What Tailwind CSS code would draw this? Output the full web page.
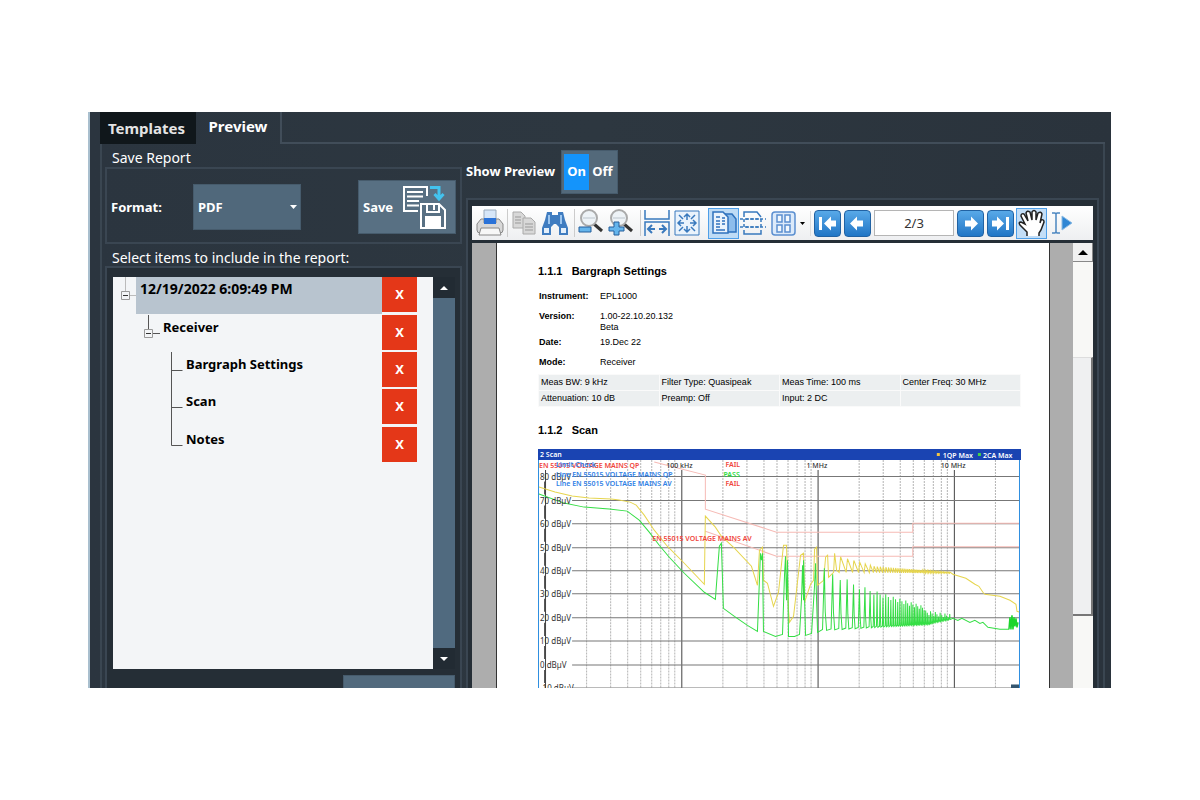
<!DOCTYPE html>
<html lang="en">
<head>
<meta charset="utf-8">
<title>Report Preview</title>
<script src="https://cdn.jsdelivr.net/npm/@tailwindcss/browser@4"></script>
</head>
<body class="bg-white">
<div class="min-h-screen flex pl-[88px] pr-[89px] py-28 font-['Noto_Sans',sans-serif] text-white">
<main class="flex-1 h-[576px] overflow-hidden flex flex-col border-l-2 border-[#a9bfce] bg-gradient-to-r from-[#2b353f] via-[#2d3740] to-[#2a333c] pl-[10px] pr-[6px]">
  <nav class="flex shrink-0 text-[15px] font-bold">
    <button class="h-8 w-24 bg-[#10171b] text-[#e4e4e4] pr-[3px] leading-8">Templates</button>
    <button class="h-8 w-[86px] border-r-2 border-[#414d59] pb-1 leading-7">Preview</button>
    <div class="flex-1 border-b-2 border-[#414d59]"></div>
  </nav>
  <div class="flex flex-1 min-h-0 border-x-2 border-[#3a4651] pl-[3px] pr-1">
    <section class="w-[357px] shrink-0 flex flex-col text-sm">
      <h2 class="pl-[7px] h-[23px] leading-7">Save Report</h2>
      <div class="h-[77px] shrink-0 border-2 border-[#3a4652] flex items-center px-1 pt-[3px]">
        <label for="fmt" class="w-[82px] font-bold text-[13px]">Format:</label>
        <div class="relative w-[108px] h-[46px]">
          <select id="fmt" class="appearance-none w-full h-full bg-[#50687b] border border-[#465b6c] pl-1 text-[13px] font-bold text-white"><option>PDF</option></select>
          <svg class="absolute right-1 top-[21px] pointer-events-none" width="7" height="4"><path d="M0 0h7L3.500 4z" fill="#fff"/></svg>
        </div>
        <button class="ml-auto w-[98px] h-[54px] bg-[#587083] border border-[#465b6c] flex items-center pl-1 text-[13px] font-bold">Save
          <svg class="ml-2" width="46" height="46" viewBox="0 0 46 46" fill="none">
            <path d="M17 27H3V3h23v9" stroke="#fff" stroke-width="2"/>
            <path d="M6 8h16M6 12.500h16M6 17h12M6 21.500h12" stroke="#fff" stroke-width="2"/>
            <path d="M29 3.500h9V13M33.500 10l4.500 5 4.500-5" stroke="#43c3ee" stroke-width="3"/>
            <path d="M20 20h18l6 6v18H20z" stroke="#fff" stroke-width="2"/>
            <path d="M26 20v8h12v-8M33 21v5" stroke="#fff" stroke-width="2"/>
            <path d="M24 32h16v12H24z" fill="#fff"/>
          </svg>
        </button>
      </div>
      <h2 class="pl-[7px] h-[22px] shrink-0 leading-[27px]">Select items to include in the report:</h2>
      <div class="flex-1 border-2 border-b-0 border-[#3a4652] bg-[#252e36] pt-[9px] pl-[6px] pr-[5px] flex flex-col">
        <div class="flex h-[392px] shrink-0">
          <div class="flex-1 bg-[#f3f5f7] text-black text-[13px] font-bold pr-4">
            <div class="flex h-[37px]">
              <svg width="23" height="37" fill="none"><path d="M12.500 0v14M17 18.500h6" stroke="#bbb"/><path d="M8.500 14.500h8v8h-8z" stroke="#999"/><path d="M10 18.500h5" stroke="#333"/></svg>
              <span class="flex-1 bg-[#b8c4cf] pl-1 text-sm leading-6">12/19/2022 6:09:49 PM</span>
              <button class="w-[35px] h-[35px] bg-[#e43718] text-white" aria-label="Remove report">X</button>
            </div>
            <div class="flex h-[38px] pt-px">
              <svg width="50" height="37" fill="none"><path d="M35.500 0v15M39 18.500h8" stroke="#555"/><path d="M31.500 14.500h8v8h-8z" stroke="#999"/><path d="M33 18.500h5" stroke="#333"/></svg>
              <span class="flex-1 leading-6">Receiver</span>
              <button class="w-[35px] h-[35px] bg-[#e43718] text-white" aria-label="Remove receiver">X</button>
            </div>
            <div class="flex h-[37px]">
              <svg width="73" height="37" fill="none"><path d="M58.500 0v37M58.500 18.500h11" stroke="#555"/></svg>
              <span class="flex-1 leading-6">Bargraph Settings</span>
              <button class="w-[35px] h-[35px] bg-[#e43718] text-white" aria-label="Remove settings">X</button>
            </div>
            <div class="flex h-[38px]">
              <svg width="73" height="38" fill="none"><path d="M58.500 0v38M58.500 18.500h11" stroke="#555"/></svg>
              <span class="flex-1 leading-6">Scan</span>
              <button class="w-[35px] h-[35px] bg-[#e43718] text-white" aria-label="Remove scan">X</button>
            </div>
            <div class="flex h-[37px]">
              <svg width="73" height="37" fill="none"><path d="M58.500 0v18.500h11" stroke="#555"/></svg>
              <span class="flex-1 leading-6">Notes</span>
              <button class="w-[35px] h-[35px] bg-[#e43718] text-white" aria-label="Remove notes">X</button>
            </div>
          </div>
          <div class="w-[22px] flex flex-col bg-[#222b33]">
            <svg width="21" height="21"><path d="M7 13h8l-4-4z" fill="#fff"/></svg>
            <div class="w-full flex-1 bg-[#506a7f]"></div>
            <svg width="21" height="21"><path d="M7 9h8l-4 4z" fill="#fff"/></svg>
          </div>
        </div>
        <button class="mt-[6px] ml-auto w-28 h-10 shrink-0 bg-[#526a7d] border border-[#465b6c]" aria-label="Select all"></button>
      </div>
    </section>

    <section class="flex-1 min-w-0 flex flex-col pl-1">
      <div class="flex h-[54px] shrink-0 items-center text-[13px] font-bold pt-px">
        <span class="w-[95px]">Show Preview</span>
        <div class="w-[57px] h-11 bg-[#53697a] border border-[#465b6c] flex items-center pl-[2px]">
          <button class="w-[25px] h-9 bg-[#1494fb]">On</button>
          <button class="w-[27px] h-9">Off</button>
        </div>
      </div>
      <div class="flex-1 min-h-0 border-2 border-b-0 border-[#3a4652] bg-[#252e36] pt-[6px] px-1 flex flex-col">
        <div class="h-[34px] shrink-0 bg-gradient-to-b from-white to-[#eeeff1] flex items-center" role="toolbar">
          <button class="w-9 flex justify-center border-r border-[#ccc]" aria-label="Print">
            <svg width="28" height="28" viewBox="0 0 28 28"><path d="M8 1h12v12H8z" fill="#d6e6f8" stroke="#9ab"/><path d="M5 10h3v4h12v-4h3l4 5v6q0 3-3 3H4q-3 0-3-3v-6z" fill="#d8d8d8" stroke="#888"/><path d="M8 9h12v6H8z" fill="#2a72d8"/><path d="M5 19h18l2 7H3z" fill="#f7f7f7" stroke="#888"/></svg></button>
          <button class="w-8 flex justify-center" aria-label="Copy">
            <svg width="26" height="26" viewBox="0 0 26 26" fill="#d8d8d8" stroke="#aaa"><path d="M2 2h8l4 4v12H2z"/><path d="M12 8h8l4 4v12H12z"/><path d="M4 7h6M4 10h6M4 13h6M14 14h8M14 17h8M14 20h8" stroke="#999"/></svg></button>
          <button class="w-[30px] flex justify-center" aria-label="Find">
            <svg width="28" height="26" viewBox="0 0 28 26"><path d="M6 2h5v3h6V2h5l2 8 3 8v7h-9v-8l-3-3h-2l-3 3v8H1v-7l3-8z" fill="#3f7cc0"/><path d="M3 18h5v5H3zM20 18h5v5h-5z" fill="#e3effb"/><path d="M8 5v9M20 5v9" stroke="#9cc6f0" stroke-width="2"/></svg></button>
          <button class="w-8 flex justify-center border-l border-[#ccc] ml-1" aria-label="Zoom out">
            <svg width="28" height="28" viewBox="0 0 28 28"><path d="M17 15l8 7" stroke="#333" stroke-width="3"/><circle cx="12" cy="9" r="8" fill="#eef3f7" stroke="#aaa" stroke-width="2"/><path d="M6 9h12" stroke="#d5dce2" stroke-width="2"/><path d="M2 18h12v5H2z" fill="#65b5ec" stroke="#245f9c"/></svg></button>
          <button class="w-[30px] flex justify-center" aria-label="Zoom in">
            <svg width="28" height="28" viewBox="0 0 28 28"><path d="M17 15l8 7" stroke="#333" stroke-width="3"/><circle cx="12" cy="9" r="8" fill="#eef3f7" stroke="#aaa" stroke-width="2"/><path d="M6 9h12" stroke="#d5dce2" stroke-width="2"/><path d="M7 13h5v5h5v4h-5v4H7v-4H2v-4h5z" fill="#65b5ec" stroke="#245f9c"/></svg></button>
          <button class="w-8 flex justify-center border-l border-[#ccc] ml-1" aria-label="Fit width">
            <svg width="26" height="26" viewBox="0 0 26 26" fill="none" stroke="#3979bd" stroke-width="1.500"><path d="M1 0v9h24V0M1 26V12h24v14"/><path d="M4 19h7M15 19h7M8 15l-4 4 4 4M18 15l4 4-4 4" stroke-width="2"/></svg></button>
          <button class="w-[30px] flex justify-center" aria-label="Fit page">
            <svg width="26" height="26" viewBox="0 0 26 26" fill="none" stroke="#3979bd"><path d="M1 1h24v24H1z" fill="#eaf3fc"/><path d="M13 4v6M13 16v6M4 13h6M16 13h6M10 7l3-3 3 3M10 19l3 3 3-3M7 10l-3 3 3 3M19 10l3 3-3 3M5 5l4 4M21 5l-4 4M5 21l4-4M21 21l-4-4" stroke-width="1.500"/></svg></button>
          <button class="w-[31px] h-[31px] ml-[6px] flex items-center justify-center bg-[#bfdcf6] border border-[#4f9fe8]" aria-label="Page layout">
            <svg width="26" height="24" viewBox="0 0 26 24" fill="#eaf3fc" stroke="#2f72bd" stroke-width="1.500"><path d="M13 3h8l4 5v13H13z" fill="#8dbdec"/><path d="M2 1h10l5 5v16H2z"/><path d="M5 6h4M11 7h3M5 10h4M11 10h3M5 13h4M11 13h3M5 16h4M5 19h9"/></svg></button>
          <button class="w-[27px] flex justify-center" aria-label="Continuous">
            <svg width="26" height="26" viewBox="0 0 26 26" fill="none" stroke="#3979bd" stroke-width="1.500"><path d="M4 7V2h13l4 5M4 20v4h17v-4"/><path d="M4 17V9h17v8z" stroke-dasharray="3 2"/><path d="M0 9h26M0 17h26" stroke-dasharray="3 2"/></svg></button>
          <button class="w-[45px] flex items-center gap-1 justify-center border-r border-[#ddd]" aria-label="Multiple pages">
            <svg width="25" height="25" viewBox="0 0 25 25" fill="#f3f8fd" stroke="#5b8fd0" stroke-width="1.500"><rect x="1" y="1" width="23" height="23" rx="3" fill="#dceafa"/><path d="M6 4h5v7H6zM14 4h5v7h-5zM6 14h5v7H6zM14 14h5v7h-5z"/></svg>
            <svg width="5" height="3"><path d="M0 0h5L2.500 3z"/></svg></button>
          <button class="ml-[3px] w-[27px] h-[27px] rounded border border-[#2162a3] bg-gradient-to-b from-[#58a9e8] to-[#2076c6]" aria-label="First page">
            <svg width="25" height="25" viewBox="0 0 25 25" fill="#fff"><path d="M4 6h3v13H4zM9 12.500l7-7v4h5v6h-5v4z"/></svg></button>
          <button class="ml-[3px] w-[27px] h-[27px] rounded border border-[#2162a3] bg-gradient-to-b from-[#58a9e8] to-[#2076c6]" aria-label="Previous page">
            <svg width="25" height="25" viewBox="0 0 25 25" fill="#fff"><path d="M5 12.500l7-7v4h6v6h-6v4z"/></svg></button>
          <input class="ml-[3px] min-w-0 flex-1 h-[26px] border border-[#b5b5b5] bg-white text-center text-[13px] text-[#333]" value="2/3" aria-label="Page">
          <button class="ml-[3px] w-[27px] h-[27px] rounded border border-[#2162a3] bg-gradient-to-b from-[#58a9e8] to-[#2076c6]" aria-label="Next page">
            <svg width="25" height="25" viewBox="0 0 25 25" fill="#fff"><path d="M20 12.500l-7-7v4H7v6h6v4z"/></svg></button>
          <button class="ml-[3px] w-[27px] h-[27px] rounded border border-[#2162a3] bg-gradient-to-b from-[#58a9e8] to-[#2076c6]" aria-label="Last page">
            <svg width="25" height="25" viewBox="0 0 25 25" fill="#fff"><path d="M18 6h3v13h-3zM16 12.500l-7-7v4H4v6h5v4z"/></svg></button>
          <button class="ml-[2px] w-[31px] h-[31px] flex items-center justify-center bg-[#c3def7] border border-[#4f9fe8]" aria-label="Pan">
            <svg width="28" height="28" viewBox="0 0 28 28"><path d="M9 27v-4L2 16q-2-3 1-3l4 2L3 7q0-3 3-2l4 7L8 4q1-3 4-1l2 8V3q2-3 4 0v8l2-7q3-2 4 1l-2 9 1-3q3-1 3 2l-3 8-2 3v3" fill="#fff" stroke="#222" stroke-width="1.500"/></svg></button>
          <button class="ml-1 mr-5 w-[22px]" aria-label="Select text">
            <svg width="22" height="22" viewBox="0 0 22 22"><path d="M1 1h3l1 1 1-1h3M5 2v18M1 21h3l1-1 1 1h3" fill="none" stroke="#4b86c0" stroke-width="1.500"/><path d="M11 4l10 7-10 7z" fill="#2f86d4" stroke="#8bbbe4"/></svg></button>
        </div>
        <div class="mt-[3px] flex flex-1 min-h-0 bg-[#adadad] pl-6">
          <article class="flex-1 min-w-0 bg-white border-x border-[#333] text-black pl-[41px] pr-7 pt-5 font-['Liberation_Sans',sans-serif] text-[9px] leading-[11px]">
            <h3 class="text-[11px] leading-4 font-bold">1.1.1 &nbsp; Bargraph Settings</h3>
            <dl class="grid grid-cols-[61px_90px] mt-3 pl-px">
              <dt class="font-bold h-5">Instrument:</dt><dd>EPL1000</dd>
              <dt class="font-bold h-[26px]">Version:</dt><dd>1.00-22.10.20.132<br>Beta</dd>
              <dt class="font-bold h-5">Date:</dt><dd>19.Dec 22</dd>
              <dt class="font-bold h-[17px]">Mode:</dt><dd>Receiver</dd>
            </dl>
            <table class="w-full table-fixed border border-[#d0d4d6] bg-[#eceff0]">
              <tbody>
              <tr class="h-4"><td class="pl-[2px] border border-[#fafafa]">Meas BW: 9 kHz</td><td class="pl-[2px] border border-[#fafafa]">Filter Type: Quasipeak</td><td class="pl-[2px] border border-[#fafafa]">Meas Time: 100 ms</td><td class="pl-[2px] border border-[#fafafa]">Center Freq: 30 MHz</td></tr>
              <tr class="h-4"><td class="pl-[2px] border border-[#fafafa]">Attenuation: 10 dB</td><td class="pl-[2px] border border-[#fafafa]">Preamp: Off</td><td class="pl-[2px] border border-[#fafafa]">Input: 2 DC</td><td class="border border-[#fafafa]"></td></tr>
              </tbody>
            </table>
            <h3 class="text-[11px] leading-4 font-bold mt-[15px] mb-[11px]">1.1.2 &nbsp; Scan</h3>
            <svg class="w-full block" viewBox="539 449 482 260" fill="none" font-family="Noto Sans, sans-serif" font-size="7" font-weight="600">
              <g id="grid"></g>
              <g stroke="#f6bab5"><path d="M655 462L706 475V509L777 532H913V523H1020"/><path d="M706 531L777 556H913V546.500H1020"/></g>
              <path id="yellow" stroke="#e6d54e"/>
              <path id="green" stroke="#35de45"/>
              <path d="M1009 629l1-12 1 12 1-14 1 14 1-12 1 9 1-8 1 9 1-5" stroke="#1bd52c" stroke-width="1.500"/>
              <path d="M539.500 449V709M1019.500 449V709" stroke="#2f8fe0"/>
              <path d="M539 449h482v11H539z" fill="#1a44b2"/>
              <path d="M1011 684h8v5h-8z" fill="#35566f"/>
              <g fill="#fff"><text x="541" y="457">2 Scan</text><text x="943" y="458">1QP Max</text><text x="983" y="458">2CA Max</text></g>
              <path d="M937 453h3v3h-3z" fill="#f5c542"/><path d="M978 453h3v3h-3z" fill="#41d34a"/>
              <g fill="#333" font-weight="500"><text x="667" y="468">100 kHz</text><text x="807" y="468">1 MHz</text><text x="941" y="468">10 MHz</text></g>
              <g id="labels" fill="#333" font-size="8" font-weight="400"></g>
              <g fill="#f0453c"><text x="540" y="468">EN 55015 VOLTAGE MAINS QP</text><text x="653" y="541">EN 55015 VOLTAGE MAINS AV</text><text x="726" y="467">FAIL</text><text x="726" y="486">FAIL</text></g>
              <text x="724" y="477" fill="#2edc42">PASS</text>
              <g fill="#2f7fe6"><text x="557" y="467">Limit Check</text><text x="557" y="477">Line EN 55015 VOLTAGE MAINS QP</text><text x="557" y="486">Line EN 55015 VOLTAGE MAINS AV</text></g>
            </svg>
          </article>
          <div class="ml-[23px] w-5 bg-[#f8f8f6] flex flex-col">
            <button class="h-[19px] border-b border-r border-[#888] bg-[#f1f1f1] flex items-center justify-center" aria-label="Scroll up"><svg width="10" height="5"><path d="M0 5h10L5 0z" fill="#000"/></svg></button>
            <div class="mt-[95px] h-[259px] bg-[#eff0f1] border-b-2 border-r-2 border-t border-t-[#ddd] border-[#777]"></div>
          </div>
        </div>
      </div>
    </section>
  </div>
</main>
</div>
<script>
// Logarithmic frequency grid from 9 kHz to 30 MHz, 10 dB rows.
const decade = 136, x100k = 681.7;
let grid = '', labels = '';
for (let d = -2; d < 3; d++) for (let n = 1; n < 10; n++) {
  const x = Math.round(x100k + decade * (d + Math.log10(n))) + 0.5;
  if (x < 545 || x > 1018) continue;
  grid += n === 1
    ? `<path d="M${x} 470V709" stroke="#444"/>`
    : `<path d="M${x} 460V709" stroke="#b4b4b4" stroke-dasharray="2 1"/>`;
}
for (let i = 0; i < 10; i++) {
  const y = Math.round(476.3 + 23.4 * i) + 0.5;
  grid += `<path d="M573 ${y}H1020" stroke="#777"/><path d="M545.5 ${y + 5}V${y + 18}" stroke="#555"/>`;
  labels += `<text x="541" y="${y + 3}">${80 - 10 * i} dBµV</text>`;
}
document.getElementById('grid').innerHTML = grid;
document.getElementById('labels').innerHTML = labels;

// Harmonic peaks become denser with frequency; they fade into the noise floor.
const lerp = (a, b, t) => a + (b - a) * t;
let g = 'M540 494L565 503L585 507L610 509L628 511L640 520L650 532L660 545L670 557L685 573L705 592L716 599L720 546L722 543L724 608L735 616L748 625L758 631L761 553L762 560L763 553L764 631L776 636L783 634L785 575L786 556L787 600L788 560L789 636L795 636L800 634L802 598L803 565L804 600L804 560L806 635L812 633L815 585L816 563L817 600L818 632';
let y = 'M540 487L556 492L573 496L590 498L612 499L620 500L631 502L637 505L645 515L655 530L668 546L685 563L705 584L706 516L716 527L722 536L735 548L752 566L758 585L760 550L763 547L764 580L768 583L774 606L779 592L784 545L787 545L789 610L790 622L794 616L797 590L801 555L804 553L805 602L811 584L814 580L815 549L817 547L818 585L824 580L826 557L828 555L829 577L834 572L835 553L837 570';
for (let x = 818, n = 9; x < 950; n++) {
  const t = (x - 818) / 132;
  const step = Math.max(1.6, 81 / n * (t > .4 ? .7 : 1));
  const top = t < .3 ? lerp(568, 586, t / .3) : t < .8 ? lerp(586, 606, (t - .3) / .5) : lerp(610, 614, (t - .8) / .2);
  const base = t < .85 ? lerp(630, 624, t / .85) : lerp(623, 619, (t - .85) / .15);
  g += `L${x + step * .55} ${base - 1}L${x + step * .75} ${top + (n % 3) * 2}L${x + step * .85} ${lerp(top, base, .7)}L${x + step} ${base}`;
  if (x > 835) y += `L${x + step * .6} ${lerp(572, 573, t)}L${x + step * .8} ${t < .4 ? lerp(552, 566, t / .4) : lerp(566, 572, (t - .4) / .6)}`;
  x += step;
}
g += 'L953 618L958 620L962 618L970 622L975 620L980 623L983 622L988 627L1000 629L1009 629';
y += 'L953 574L966 578L975 584L979 586L983 592L985 594L1000 596L1010 600L1016 604L1017 611L1020 612';
document.getElementById('green').setAttribute('d', g);
document.getElementById('yellow').setAttribute('d', y);
</script>
</body>
</html>
